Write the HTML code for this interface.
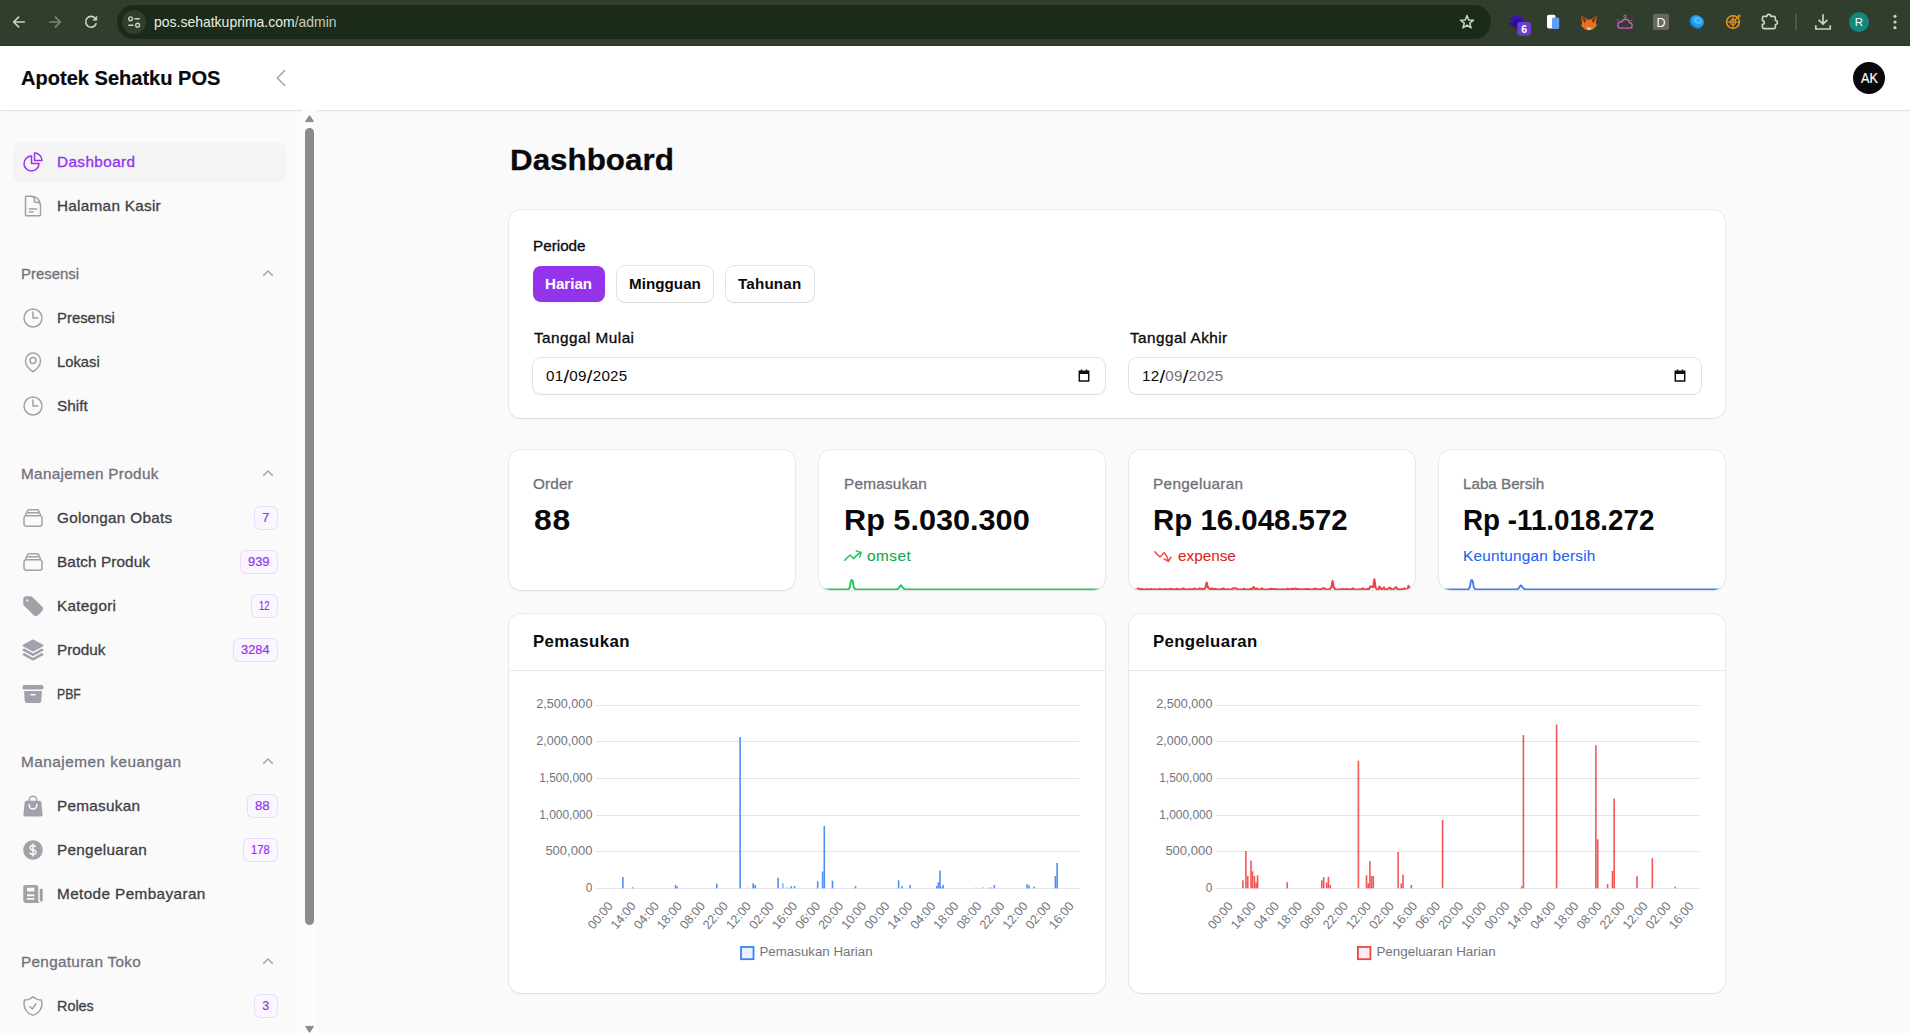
<!DOCTYPE html>
<html lang="id"><head><meta charset="utf-8"><title>Dashboard - Apotek Sehatku POS</title>
<style>
*{box-sizing:border-box;margin:0;padding:0}
html,body{width:1910px;height:1033px;overflow:hidden;background:#fafafa;font-family:"Liberation Sans", sans-serif;}
body{position:relative}
.t{position:absolute;white-space:nowrap;line-height:normal;}
.ic{position:absolute;overflow:visible}
.ax{font-family:"Liberation Sans", sans-serif;font-size:12.5px;fill:#71747e}
#tb{position:absolute;left:0;top:0;width:1910px;height:46px;background:#313e2d;border-bottom:1px solid #2b3728}
#url{position:absolute;left:117px;top:5px;width:1374px;height:34px;border-radius:17px;background:#1c2a1a}
#site{position:absolute;left:122px;top:10px;width:24px;height:24px;border-radius:12px;background:#313e2d}
#hdr{position:absolute;left:0;top:46px;width:1910px;height:64px;background:#fff;box-shadow:0 1px 0 rgba(9,9,11,.07),0 1px 3px rgba(0,0,0,.045)}
#ava{position:absolute;left:1853px;top:62px;width:32px;height:32px;border-radius:16px;background:#09090b}
#act{position:absolute;left:13px;top:142px;width:273px;height:40px;border-radius:8px;background:#f4f4f5}
#thumb{position:absolute;left:305px;top:128px;width:9px;height:797px;border-radius:4.5px;background:#8b8b8b}
#track{position:absolute;left:302px;top:110px;width:15px;height:923px;background:#fcfcfc}
.bdg{position:absolute;height:24px;border-radius:6px;background:#faf5ff;box-shadow:inset 0 0 0 1px rgba(147,51,234,.13)}
.card{position:absolute;background:#fff;border-radius:12px;box-shadow:0 0 0 1px rgba(9,9,11,.06),0 1px 2px rgba(0,0,0,.06)}
.btn{position:absolute;top:266px;height:36px;border-radius:8px;background:#fff;box-shadow:0 0 0 1px rgba(9,9,11,.11),0 1px 2px rgba(0,0,0,.05)}
.inp{position:absolute;top:358px;height:36px;width:572px;border-radius:8px;background:#fff;box-shadow:0 0 0 1px rgba(9,9,11,.11),0 1px 2px rgba(0,0,0,.05)}
.hr{position:absolute;height:1px;background:#e7e7ea;top:670px;width:596px}
</style></head>
<body>
<div id="browser">
<div id="tb"></div>
<div id="url"></div>
<div id="site"></div>
<svg class="ic" style="left:0;top:0" width="1910" height="46" viewBox="0 0 1910 46" fill="none">
 <!-- back -->
 <path d="M24.900 22H14M19.100 16.600 13.700 22l5.400 5.400" stroke="#c7d6be" stroke-width="1.600"/>
 <!-- forward -->
 <path d="M49.200 22h10.900M54.900 16.600 60.300 22l-5.400 5.400" stroke="#7b8875" stroke-width="1.600"/>
 <!-- reload -->
 <path d="M95.200 18.300A5.400 5.400 0 1 0 96.300 23.200" stroke="#c7d6be" stroke-width="1.600"/>
 <path d="M96.900 16.300v4h-4z" fill="#c7d6be" stroke="#c7d6be" stroke-width="0.600" stroke-linejoin="round"/>
 <!-- tune icon -->
 <circle cx="130.600" cy="18.800" r="1.900" stroke="#c7d6be" stroke-width="1.400"/>
 <path d="M134.500 18.800h5.200M128.300 25.200h5.200" stroke="#c7d6be" stroke-width="1.500"/>
 <circle cx="137.600" cy="25.200" r="1.900" stroke="#c7d6be" stroke-width="1.400"/>
 <!-- star -->
 <path d="M1467.00 15.40 L1468.70 19.95 L1473.56 20.17 L1469.76 23.20 L1471.06 27.88 L1467.00 25.20 L1462.94 27.88 L1464.24 23.20 L1460.44 20.17 L1465.30 19.95Z" stroke="#c7d6be" stroke-width="1.500" stroke-linejoin="round"/>
 <!-- ext1 purple layers -->
 <path d="M1509 19.500l8-5.300 8 5.300-8 5.300z" fill="#3b13b0"/>
 <path d="M1509 23.800l8-5.300 8 5.300-8 5.300z" fill="#2e0d94"/>
 <rect x="1517.200" y="22" width="13.800" height="13.800" rx="3" fill="#6a3fc8"/>
 <!-- ext2 pages -->
 <rect x="1547" y="14.800" width="8.500" height="13.800" rx="1.800" fill="#ffffff"/>
 <rect x="1552" y="17.600" width="7.200" height="11.400" rx="1.600" fill="#5ea0f7"/>
 <!-- ext3 fox -->
 <path d="M1581 15.400l6.300 4h3.400l6.300-4-1.200 7.200 1 3.200-3.600 3.400-2.700 1h-3l-2.700-1-3.600-3.400 1-3.200z" fill="#e8701c"/>
 <path d="M1581 15.400l5.200 4.600-1.600 3.200zM1597 15.400l-5.200 4.600 1.600 3.200z" fill="#7a2a10"/>
 <path d="M1586.500 27.500h5l-1 2.200h-3z" fill="#d8d0c8"/>
 <!-- ext4 cloud -->
 <path d="M1620.300 28.100h8.900a2.700 2.700 0 0 0 .4-5.400 4.100 4.100 0 0 0-7.900-.8 3.100 3.100 0 0 0-1.400 6.200z" stroke="#cf5ad6" stroke-width="1.400"/>
 <circle cx="1625" cy="16.300" r="1.300" stroke="#e070a0" stroke-width="0.800"/>
 <circle cx="1617.800" cy="19.900" r="0.700" fill="#e070a0"/><circle cx="1631.800" cy="20.800" r="0.700" fill="#e070a0"/>
 <!-- ext5 D -->
 <rect x="1653" y="13.800" width="16" height="16.200" rx="1.500" fill="#666666"/>
 <!-- ext6 blue disc -->
 <ellipse cx="1696.300" cy="22.600" rx="7.200" ry="5.800" transform="rotate(35 1696.300 22.600)" fill="#0f6fc4"/><ellipse cx="1697.200" cy="21.200" rx="7.200" ry="5.800" transform="rotate(35 1697.200 21.200)" fill="#1e9cf0"/>
 <ellipse cx="1697.800" cy="20.600" rx="4.300" ry="3.100" transform="rotate(35 1697.800 20.600)" fill="#58bbff"/>
 <ellipse cx="1698.300" cy="20.200" rx="1.800" ry="1.200" transform="rotate(35 1698.300 20.200)" fill="#1e9cf0"/>
 <!-- ext7 orange target -->
 <circle cx="1733" cy="22" r="6.400" stroke="#f39b1c" stroke-width="1.400"/>
 <circle cx="1733" cy="22" r="2.600" stroke="#f07a1a" stroke-width="1.200"/>
 <path d="M1733 15.600v12.800M1726.600 22h12.800M1735 20l4.300-4.300" stroke="#f39b1c" stroke-width="1.100"/>
 <circle cx="1739.200" cy="16" r="1.500" fill="#f07a1a"/>
 <!-- puzzle -->
 <path d="M1763.900 16.400H1766.900A2 2 0 0 1 1770.900 16.400H1773.900Q1775.400 16.400 1775.400 17.900V20.500A2 2 0 0 1 1775.400 24.500V27.100Q1775.400 28.600 1773.900 28.600H1763.900Q1762.400 28.600 1762.400 27.100V24.400A1.900 1.900 0 0 0 1762.400 20.600V17.900Q1762.400 16.400 1763.900 16.400Z" stroke="#c7d6be" stroke-width="1.600" stroke-linejoin="round"/>
 <!-- separator -->
 <path d="M1796 14v16" stroke="#566350" stroke-width="1.500"/>
 <!-- download -->
 <path d="M1823 14.200v9.600M1818.600 19.800l4.400 4.300 4.400-4.300M1815.800 25.200v3.800h14.400v-3.800" stroke="#c7d6be" stroke-width="1.700"/>
 <!-- avatar R -->
 <circle cx="1859" cy="22" r="10" fill="#12877b"/>
 <!-- dots -->
 <circle cx="1895" cy="16.300" r="1.600" fill="#c7d6be"/><circle cx="1895" cy="22" r="1.600" fill="#c7d6be"/><circle cx="1895" cy="27.700" r="1.600" fill="#c7d6be"/>
 <text x="1524.100" y="33.300" text-anchor="middle" font-size="10.500" font-weight="700" fill="#fff" font-family='"Liberation Sans", sans-serif'>6</text>
 <text x="1661" y="27" text-anchor="middle" font-size="12.500" fill="#fff" font-family='"Liberation Sans", sans-serif'>D</text>
 <text x="1859" y="26" text-anchor="middle" font-size="11.500" fill="#fff" font-family='"Liberation Sans", sans-serif'>R</text>
</svg>
<span class="t" id="t0" style="left:154.4px;top:14px;font-size:14.3px;color:#e9efe4;transform:scaleX(0.9778);transform-origin:0 0;">pos.sehatkuprima.com<span style="color:#c3cdbd">/admin</span></span>
</div>
<header><div id="hdr"></div><div id="ava"></div>
<svg class="ic" style="left:269px;top:66px" width="24" height="24" viewBox="0 0 24 24" fill="none" stroke="#a1a1aa" stroke-width="1.5" stroke-linecap="round" stroke-linejoin="round"><path d="M15.75 19.5 8.25 12l7.5-7.5"/></svg>
<span class="t" id="t1" style="left:21.4px;top:67px;font-size:20px;color:#09090b;font-weight:700;-webkit-text-stroke:0.2px #09090b;transform:scaleX(1.0023);transform-origin:0 0;">Apotek Sehatku POS</span>
<span class="t" id="t2" style="left:1860.8px;top:71px;font-size:13.8px;color:#ffffff;-webkit-text-stroke:0.2px #ffffff;transform:scaleX(0.9127);transform-origin:0 0;">AK</span>
</header>
<nav><div id="act"></div>
<div id="track"></div><div id="thumb"></div>
<svg class="ic" style="left:302px;top:111px" width="15" height="922" viewBox="0 0 15 922"><path d="M7.500 4.600l4 6h-8z" fill="#8b8b8b" stroke="#8b8b8b" stroke-width="1" stroke-linejoin="round"/><path d="M7.500 921.400l4-6h-8z" fill="#8b8b8b" stroke="#8b8b8b" stroke-width="1" stroke-linejoin="round"/></svg>
<div class="bdg" style="left:254.0px;top:506px;width:24.0px"></div><div class="bdg" style="left:240.1px;top:550px;width:37.9px"></div><div class="bdg" style="left:251.1px;top:594px;width:26.9px"></div><div class="bdg" style="left:233.0px;top:638px;width:45.0px"></div><div class="bdg" style="left:247.0px;top:794px;width:31.0px"></div><div class="bdg" style="left:243.0px;top:838px;width:35.0px"></div><div class="bdg" style="left:254.1px;top:994px;width:23.9px"></div>
<svg class="ic" style="left:21px;top:150px" width="24" height="24" viewBox="0 0 24 24" fill="none" stroke="#9333ea" stroke-width="1.5" stroke-linecap="round" stroke-linejoin="round"><path d="M10.5 6a7.5 7.5 0 1 0 7.5 7.5h-7.5V6Z"/><path d="M13.5 10.5H21A7.5 7.5 0 0 0 13.5 3v7.5Z"/></svg><svg class="ic" style="left:21px;top:194px" width="24" height="24" viewBox="0 0 24 24" fill="none" stroke="#a1a1aa" stroke-width="1.5" stroke-linecap="round" stroke-linejoin="round"><path d="M19.5 14.25v-2.625a3.375 3.375 0 0 0-3.375-3.375h-1.5A1.125 1.125 0 0 1 13.5 7.125v-1.5a3.375 3.375 0 0 0-3.375-3.375H8.25m0 12.75h7.5m-7.5 3H12M10.5 2.25H5.625c-.621 0-1.125.504-1.125 1.125v17.25c0 .621.504 1.125 1.125 1.125h12.75c.621 0 1.125-.504 1.125-1.125V11.25a9 9 0 0 0-9-9Z"/></svg><svg class="ic" style="left:21px;top:306px" width="24" height="24" viewBox="0 0 24 24" fill="none" stroke="#a1a1aa" stroke-width="1.5" stroke-linecap="round" stroke-linejoin="round"><path d="M12 6v6h4.5m4.5 0a9 9 0 1 1-18 0 9 9 0 0 1 18 0Z"/></svg><svg class="ic" style="left:21px;top:350px" width="24" height="24" viewBox="0 0 24 24" fill="none" stroke="#a1a1aa" stroke-width="1.5" stroke-linecap="round" stroke-linejoin="round"><path d="M15 10.5a3 3 0 1 1-6 0 3 3 0 0 1 6 0Z"/><path d="M19.5 10.5c0 7.142-7.5 11.25-7.5 11.25S4.5 17.642 4.5 10.5a7.5 7.5 0 1 1 15 0Z"/></svg><svg class="ic" style="left:21px;top:394px" width="24" height="24" viewBox="0 0 24 24" fill="none" stroke="#a1a1aa" stroke-width="1.5" stroke-linecap="round" stroke-linejoin="round"><path d="M12 6v6h4.5m4.5 0a9 9 0 1 1-18 0 9 9 0 0 1 18 0Z"/></svg><svg class="ic" style="left:21px;top:506px" width="24" height="24" viewBox="0 0 24 24" fill="none" stroke="#a1a1aa" stroke-width="1.5" stroke-linecap="round" stroke-linejoin="round"><path d="M6 6.878V6a2.25 2.25 0 0 1 2.25-2.25h7.5A2.25 2.25 0 0 1 18 6v.878m-12 0c.235-.083.487-.128.75-.128h10.5c.263 0 .515.045.75.128m-12 0A2.25 2.25 0 0 0 4.5 9v.878m13.5-3A2.25 2.25 0 0 1 19.5 9v.878m0 0a2.246 2.246 0 0 0-.75-.128H5.25c-.263 0-.515.045-.75.128m15 0A2.25 2.25 0 0 1 21 12v6a2.25 2.25 0 0 1-2.25 2.25H5.25A2.25 2.25 0 0 1 3 18v-6c0-.98.626-1.813 1.5-2.122"/></svg><svg class="ic" style="left:21px;top:550px" width="24" height="24" viewBox="0 0 24 24" fill="none" stroke="#a1a1aa" stroke-width="1.5" stroke-linecap="round" stroke-linejoin="round"><path d="M6 6.878V6a2.25 2.25 0 0 1 2.25-2.25h7.5A2.25 2.25 0 0 1 18 6v.878m-12 0c.235-.083.487-.128.75-.128h10.5c.263 0 .515.045.75.128m-12 0A2.25 2.25 0 0 0 4.5 9v.878m13.5-3A2.25 2.25 0 0 1 19.5 9v.878m0 0a2.246 2.246 0 0 0-.75-.128H5.25c-.263 0-.515.045-.75.128m15 0A2.25 2.25 0 0 1 21 12v6a2.25 2.25 0 0 1-2.25 2.25H5.25A2.25 2.25 0 0 1 3 18v-6c0-.98.626-1.813 1.5-2.122"/></svg><svg class="ic" style="left:21px;top:594px" width="24" height="24" viewBox="0 0 24 24" fill="#a1a1aa"><path fill-rule="evenodd" clip-rule="evenodd" d="M5.25 2.25a3 3 0 0 0-3 3v4.318a3 3 0 0 0 .879 2.121l9.58 9.581c.92.92 2.39 1.186 3.548.428a18.849 18.849 0 0 0 5.441-5.44c.758-1.16.492-2.629-.428-3.548l-9.58-9.581a3 3 0 0 0-2.122-.879H5.25ZM6.375 7.5a1.125 1.125 0 1 0 0-2.25 1.125 1.125 0 0 0 0 2.25Z"/></svg><svg class="ic" style="left:21px;top:638px" width="24" height="24" viewBox="0 0 24 24" fill="#a1a1aa"><path fill-rule="evenodd" clip-rule="evenodd" d="M11.644 1.59a.75.75 0 0 1 .712 0l9.75 5.25a.75.75 0 0 1 0 1.32l-9.75 5.25a.75.75 0 0 1-.712 0l-9.75-5.25a.75.75 0 0 1 0-1.32l9.75-5.25Z"/><path fill-rule="evenodd" clip-rule="evenodd" d="m3.265 10.602 7.668 4.129a2.25 2.25 0 0 0 2.134 0l7.668-4.13 1.37.739a.75.75 0 0 1 0 1.32l-9.75 5.25a.75.75 0 0 1-.71 0l-9.75-5.25a.75.75 0 0 1 0-1.32l1.37-.738Z"/><path fill-rule="evenodd" clip-rule="evenodd" d="m10.933 19.231-7.668-4.13-1.37.739a.75.75 0 0 0 0 1.32l9.75 5.25c.221.12.489.12.71 0l9.75-5.25a.75.75 0 0 0 0-1.32l-1.37-.738-7.668 4.13a2.25 2.25 0 0 1-2.134-.001Z"/></svg><svg class="ic" style="left:21px;top:682px" width="24" height="24" viewBox="0 0 24 24" fill="#a1a1aa"><path fill-rule="evenodd" clip-rule="evenodd" d="M3.375 3C2.339 3 1.5 3.84 1.5 4.875v.75c0 1.036.84 1.875 1.875 1.875h17.25c1.035 0 1.875-.84 1.875-1.875v-.75C22.5 3.839 21.66 3 20.625 3H3.375Z"/><path fill-rule="evenodd" clip-rule="evenodd" d="m3.087 9 .54 9.176A3 3 0 0 0 6.62 21h10.757a3 3 0 0 0 2.995-2.824L20.913 9H3.087Zm6.163 3.75A.75.75 0 0 1 10 12h4a.75.75 0 0 1 0 1.5h-4a.75.75 0 0 1-.75-.75Z"/></svg><svg class="ic" style="left:21px;top:794px" width="24" height="24" viewBox="0 0 24 24" fill="#a1a1aa"><path fill-rule="evenodd" clip-rule="evenodd" d="M7.5 6v.75H5.513c-.96 0-1.764.724-1.865 1.679l-1.263 12A1.875 1.875 0 0 0 4.25 22.5h15.5a1.875 1.875 0 0 0 1.865-2.071l-1.263-12a1.875 1.875 0 0 0-1.865-1.679H16.5V6a4.5 4.5 0 1 0-9 0ZM12 3a3 3 0 0 0-3 3v.75h6V6a3 3 0 0 0-3-3Zm-3 8.25a3 3 0 1 0 6 0v-.75a.75.75 0 0 1 1.5 0v.75a4.5 4.5 0 1 1-9 0v-.75a.75.75 0 0 1 1.5 0v.75Z"/></svg><svg class="ic" style="left:21px;top:838px" width="24" height="24" viewBox="0 0 24 24" fill="#a1a1aa"><path fill-rule="evenodd" clip-rule="evenodd" d="M10.464 8.746c.227-.18.497-.311.786-.394v2.795a2.252 2.252 0 0 1-.786-.393c-.394-.313-.546-.681-.546-1.004 0-.323.152-.691.546-1.004ZM12.75 15.662v-2.824c.347.085.664.228.921.421.427.32.579.686.579.991 0 .305-.152.671-.579.991a2.534 2.534 0 0 1-.921.42Z"/><path fill-rule="evenodd" clip-rule="evenodd" d="M12 2.25c-5.385 0-9.75 4.365-9.75 9.75s4.365 9.75 9.75 9.75 9.75-4.365 9.75-9.75S17.385 2.25 12 2.25ZM12.75 6a.75.75 0 0 0-1.5 0v.816a3.836 3.836 0 0 0-1.72.756c-.712.566-1.112 1.35-1.112 2.178 0 .829.4 1.612 1.113 2.178.502.4 1.102.647 1.719.756v2.978a2.536 2.536 0 0 1-.921-.421l-.879-.66a.75.75 0 0 0-.9 1.2l.879.66c.533.4 1.169.645 1.821.75V18a.75.75 0 0 0 1.5 0v-.81a4.124 4.124 0 0 0 1.821-.749c.745-.559 1.179-1.344 1.179-2.191 0-.847-.434-1.632-1.179-2.191a4.122 4.122 0 0 0-1.821-.75V8.354c.29.082.559.213.786.393l.415.33a.75.75 0 0 0 .933-1.175l-.415-.33a3.836 3.836 0 0 0-1.719-.755V6Z"/></svg><svg class="ic" style="left:21px;top:882px" width="24" height="24" viewBox="0 0 24 24" fill="#a1a1aa"><path fill-rule="evenodd" clip-rule="evenodd" d="M4.125 3C3.089 3 2.250 3.840 2.250 4.875V18a3 3 0 0 0 3 3h15a3 3 0 0 1-3-3V4.875C17.250 3.839 16.410 3 15.375 3H4.125ZM6 5.700h7.300v3.700H6ZM6 12.300h7.300v1.900H6ZM6 15.900h7.300v1.900H6Z"/><path fill-rule="evenodd" clip-rule="evenodd" d="M18.750 6.750h1.875c.621 0 1.125.504 1.125 1.125V18a1.500 1.500 0 0 1-3 0V6.750Z"/></svg><svg class="ic" style="left:21px;top:994px" width="24" height="24" viewBox="0 0 24 24" fill="none" stroke="#a1a1aa" stroke-width="1.5" stroke-linecap="round" stroke-linejoin="round"><path d="M9 12.75 11.25 15 15 9.75m-3-7.036A11.959 11.959 0 0 1 3.598 6 11.99 11.99 0 0 0 3 9.749c0 5.592 3.824 10.29 9 11.623 5.176-1.332 9-6.03 9-11.622 0-1.31-.21-2.571-.598-3.751h-.152c-3.196 0-6.1-1.248-8.25-3.285Z"/></svg><svg class="ic" style="left:258px;top:263.5px" width="20" height="20" viewBox="0 0 20 20" fill="#a1a1aa"><path fill-rule="evenodd" clip-rule="evenodd" d="M9.47 6.47a.75.75 0 0 1 1.06 0l4.25 4.25a.75.75 0 1 1-1.06 1.06L10 8.06l-3.72 3.72a.75.75 0 0 1-1.06-1.06l4.25-4.25Z"/></svg><svg class="ic" style="left:258px;top:463.5px" width="20" height="20" viewBox="0 0 20 20" fill="#a1a1aa"><path fill-rule="evenodd" clip-rule="evenodd" d="M9.47 6.47a.75.75 0 0 1 1.06 0l4.25 4.25a.75.75 0 1 1-1.06 1.06L10 8.06l-3.72 3.72a.75.75 0 0 1-1.06-1.06l4.25-4.25Z"/></svg><svg class="ic" style="left:258px;top:751.5px" width="20" height="20" viewBox="0 0 20 20" fill="#a1a1aa"><path fill-rule="evenodd" clip-rule="evenodd" d="M9.47 6.47a.75.75 0 0 1 1.06 0l4.25 4.25a.75.75 0 1 1-1.06 1.06L10 8.06l-3.72 3.72a.75.75 0 0 1-1.06-1.06l4.25-4.25Z"/></svg><svg class="ic" style="left:258px;top:951.5px" width="20" height="20" viewBox="0 0 20 20" fill="#a1a1aa"><path fill-rule="evenodd" clip-rule="evenodd" d="M9.47 6.47a.75.75 0 0 1 1.06 0l4.25 4.25a.75.75 0 1 1-1.06 1.06L10 8.06l-3.72 3.72a.75.75 0 0 1-1.06-1.06l4.25-4.25Z"/></svg>
<span class="t" id="t3" style="left:57.3px;top:154px;font-size:14.3px;color:#9333ea;-webkit-text-stroke:0.3px #9333ea;transform:scaleX(1.0700);transform-origin:0 0;letter-spacing:0.380px;">Dashboard</span>
<span class="t" id="t4" style="left:57.3px;top:198px;font-size:14.3px;color:#3f3f46;-webkit-text-stroke:0.3px #3f3f46;transform:scaleX(1.0700);transform-origin:0 0;letter-spacing:0.263px;">Halaman Kasir</span>
<span class="t" id="t5" style="left:21.4px;top:266px;font-size:14.3px;color:#71717a;-webkit-text-stroke:0.3px #71717a;transform:scaleX(1.0445);transform-origin:0 0;">Presensi</span>
<span class="t" id="t6" style="left:57.3px;top:310px;font-size:14.3px;color:#3f3f46;-webkit-text-stroke:0.3px #3f3f46;transform:scaleX(1.0409);transform-origin:0 0;">Presensi</span>
<span class="t" id="t7" style="left:57.3px;top:354px;font-size:14.3px;color:#3f3f46;-webkit-text-stroke:0.3px #3f3f46;transform:scaleX(1.0332);transform-origin:0 0;">Lokasi</span>
<span class="t" id="t8" style="left:57.3px;top:398px;font-size:14.3px;color:#3f3f46;-webkit-text-stroke:0.3px #3f3f46;transform:scaleX(1.0700);transform-origin:0 0;letter-spacing:0.021px;">Shift</span>
<span class="t" id="t9" style="left:21.4px;top:466px;font-size:14.3px;color:#71717a;-webkit-text-stroke:0.3px #71717a;transform:scaleX(1.0700);transform-origin:0 0;letter-spacing:0.295px;">Manajemen Produk</span>
<span class="t" id="t10" style="left:57.3px;top:510px;font-size:14.3px;color:#3f3f46;-webkit-text-stroke:0.3px #3f3f46;transform:scaleX(1.0700);transform-origin:0 0;letter-spacing:0.272px;">Golongan Obats</span>
<span class="t" id="t11" style="left:57.3px;top:554px;font-size:14.3px;color:#3f3f46;-webkit-text-stroke:0.3px #3f3f46;transform:scaleX(1.0700);transform-origin:0 0;letter-spacing:0.089px;">Batch Produk</span>
<span class="t" id="t12" style="left:57.3px;top:598px;font-size:14.3px;color:#3f3f46;-webkit-text-stroke:0.3px #3f3f46;transform:scaleX(1.0700);transform-origin:0 0;letter-spacing:0.268px;">Kategori</span>
<span class="t" id="t13" style="left:57.3px;top:642px;font-size:14.3px;color:#3f3f46;-webkit-text-stroke:0.3px #3f3f46;transform:scaleX(1.0700);transform-origin:0 0;">Produk</span>
<span class="t" id="t14" style="left:57.3px;top:686px;font-size:14.3px;color:#3f3f46;-webkit-text-stroke:0.3px #3f3f46;transform:scaleX(0.8557);transform-origin:0 0;">PBF</span>
<span class="t" id="t15" style="left:21.4px;top:754px;font-size:14.3px;color:#71717a;-webkit-text-stroke:0.3px #71717a;transform:scaleX(1.0700);transform-origin:0 0;letter-spacing:0.479px;">Manajemen keuangan</span>
<span class="t" id="t16" style="left:57.3px;top:798px;font-size:14.3px;color:#3f3f46;-webkit-text-stroke:0.3px #3f3f46;transform:scaleX(1.0700);transform-origin:0 0;letter-spacing:0.270px;">Pemasukan</span>
<span class="t" id="t17" style="left:57.3px;top:842px;font-size:14.3px;color:#3f3f46;-webkit-text-stroke:0.3px #3f3f46;transform:scaleX(1.0700);transform-origin:0 0;letter-spacing:0.274px;">Pengeluaran</span>
<span class="t" id="t18" style="left:57.3px;top:886px;font-size:14.3px;color:#3f3f46;-webkit-text-stroke:0.3px #3f3f46;transform:scaleX(1.0700);transform-origin:0 0;letter-spacing:0.372px;">Metode Pembayaran</span>
<span class="t" id="t19" style="left:21.4px;top:954px;font-size:14.3px;color:#71717a;-webkit-text-stroke:0.3px #71717a;transform:scaleX(1.0700);transform-origin:0 0;letter-spacing:0.294px;">Pengaturan Toko</span>
<span class="t" id="t20" style="left:57.3px;top:998px;font-size:14.3px;color:#3f3f46;-webkit-text-stroke:0.3px #3f3f46;transform:scaleX(1.0065);transform-origin:0 0;">Roles</span>
<span class="t" id="t21" style="left:262.2px;top:511px;font-size:12.4px;color:#9333ea;-webkit-text-stroke:0.2px #9333ea;">7</span>
<span class="t" id="t22" style="left:248.3px;top:555px;font-size:12.4px;color:#9333ea;-webkit-text-stroke:0.2px #9333ea;transform:scaleX(1.0393);transform-origin:0 0;">939</span>
<span class="t" id="t23" style="left:259.3px;top:599px;font-size:12.4px;color:#9333ea;-webkit-text-stroke:0.2px #9333ea;transform:scaleX(0.7610);transform-origin:0 0;">12</span>
<span class="t" id="t24" style="left:241.2px;top:643px;font-size:12.4px;color:#9333ea;-webkit-text-stroke:0.2px #9333ea;transform:scaleX(1.0371);transform-origin:0 0;">3284</span>
<span class="t" id="t25" style="left:255.2px;top:799px;font-size:12.4px;color:#9333ea;-webkit-text-stroke:0.2px #9333ea;transform:scaleX(1.0582);transform-origin:0 0;">88</span>
<span class="t" id="t26" style="left:251.2px;top:843px;font-size:12.4px;color:#9333ea;-webkit-text-stroke:0.2px #9333ea;transform:scaleX(0.8991);transform-origin:0 0;">178</span>
<span class="t" id="t27" style="left:262.3px;top:999px;font-size:12.4px;color:#9333ea;-webkit-text-stroke:0.2px #9333ea;">3</span>
</nav>
<main>
<section class="card" style="left:509px;top:210px;width:1216px;height:208px"></section>
<div class="btn" style="left:533px;width:72px;background:#9333ea;box-shadow:0 1px 2px rgba(0,0,0,.05)"></div>
<div class="btn" style="left:617px;width:96px"></div>
<div class="btn" style="left:726px;width:88px"></div>
<div class="inp" style="left:533px"></div><div class="inp" style="left:1129px"></div>
<svg class="ic" style="left:1077.9px;top:368.800px" width="12" height="13" viewBox="0 0 12 13"><path d="M1.300 2.300h9.400v9.700H1.300z" fill="none" stroke="#111" stroke-width="1.500"/><path d="M1.300 2.300h9.400v2.700H1.300z" fill="#111"/><path d="M3.500 .6v2M8.500 .6v2" stroke="#111" stroke-width="1.400"/></svg><svg class="ic" style="left:1673.9px;top:368.800px" width="12" height="13" viewBox="0 0 12 13"><path d="M1.300 2.300h9.400v9.700H1.300z" fill="none" stroke="#111" stroke-width="1.500"/><path d="M1.300 2.300h9.400v2.700H1.300z" fill="#111"/><path d="M3.500 .6v2M8.500 .6v2" stroke="#111" stroke-width="1.400"/></svg>
<section class="card" style="left:509px;top:450px;width:286px;height:140px"></section>
<section class="card" style="left:819px;top:450px;width:286px;height:140px"></section>
<section class="card" style="left:1129px;top:450px;width:286px;height:140px"></section>
<section class="card" style="left:1439px;top:450px;width:286px;height:140px"></section>
<section class="card" style="left:509px;top:614px;width:596px;height:379px"></section>
<section class="card" style="left:1129px;top:614px;width:596px;height:379px"></section>
<div class="hr" style="left:509px"></div><div class="hr" style="left:1129px"></div>
<svg class="ic" style="left:0;top:0" width="1910" height="1033" viewBox="0 0 1910 1033"><defs><clipPath id="cp0"><rect x="819" y="450" width="286" height="140" rx="12"/></clipPath><clipPath id="cp1"><rect x="1129" y="450" width="286" height="140" rx="12"/></clipPath><clipPath id="cp2"><rect x="1439" y="450" width="286" height="140" rx="12"/></clipPath></defs><g clip-path="url(#cp0)"><path d="M819.0 589.4 L848.2 589.4 L849.9 587.2 L850.9 581.0 L851.8 579.9 L852.7 581.0 L853.7 587.2 L855.4 589.4 L897.0 589.4 L899.0 588.0 L900.3 585.8 L900.9 585.4 L901.5 585.8 L903.0 588.0 L905.0 589.4 L1105.0 589.4" fill="none" stroke="#22c55e" stroke-width="1.9" stroke-linejoin="round" stroke-linecap="round"/></g><g clip-path="url(#cp1)"><path d="M1129.0 588.4 L1130.6 589.4 L1132.2 589.3 L1133.8 589.6 L1135.4 589.6 L1137.0 589.6 L1138.6 588.4 L1140.2 589.6 L1141.8 589.1 L1143.4 589.6 L1145.0 589.6 L1146.6 589.3 L1148.2 589.3 L1149.8 589.6 L1151.4 589.1 L1153.0 589.6 L1154.6 589.3 L1156.2 589.6 L1157.8 589.6 L1159.4 589.1 L1161.0 589.6 L1162.6 589.3 L1164.2 589.6 L1165.8 589.1 L1167.4 589.6 L1169.0 589.4 L1170.6 588.7 L1172.2 589.3 L1173.8 589.4 L1175.4 589.6 L1177.0 588.7 L1178.6 589.4 L1180.2 589.6 L1181.8 589.1 L1183.4 588.4 L1185.0 589.6 L1186.6 589.6 L1188.2 589.6 L1189.8 589.1 L1191.4 589.6 L1193.0 589.3 L1194.6 588.4 L1196.2 589.6 L1197.8 589.6 L1199.4 588.4 L1201.0 588.7 L1202.6 589.1 L1204.2 589.4 L1205.5 587.4 L1206.7 582.6 L1207.9 587.4 L1210.6 589.6 L1212.2 588.4 L1213.8 589.6 L1215.4 588.7 L1217.0 589.6 L1218.6 589.6 L1220.2 589.3 L1221.8 589.4 L1223.4 588.4 L1225.0 589.4 L1226.6 589.6 L1228.2 589.3 L1229.8 589.6 L1231.4 589.6 L1233.0 588.4 L1234.6 588.4 L1236.2 588.4 L1237.8 589.6 L1239.4 589.6 L1241.0 589.6 L1242.6 589.6 L1244.2 588.7 L1245.8 589.6 L1247.4 589.6 L1249.0 589.6 L1250.6 588.7 L1252.2 589.6 L1253.5 587.0 L1255.4 589.3 L1257.0 588.4 L1258.6 589.6 L1260.2 589.6 L1261.8 588.4 L1263.4 589.4 L1265.0 589.6 L1266.6 589.6 L1268.2 589.6 L1269.8 589.1 L1271.4 588.7 L1273.0 589.4 L1274.6 589.1 L1276.2 589.3 L1277.8 589.3 L1279.4 589.6 L1281.0 589.6 L1282.6 589.4 L1284.2 589.6 L1285.8 589.3 L1287.4 588.7 L1289.0 589.4 L1290.6 589.3 L1292.2 588.7 L1293.8 589.3 L1295.4 588.4 L1297.0 589.3 L1298.6 589.1 L1300.2 589.4 L1301.8 589.6 L1303.4 589.4 L1305.0 589.4 L1306.6 589.1 L1308.2 589.1 L1309.8 589.6 L1311.4 589.6 L1313.0 589.4 L1314.6 588.7 L1316.2 588.7 L1317.8 589.6 L1319.4 589.4 L1321.0 589.3 L1322.6 588.4 L1324.2 588.4 L1325.8 589.4 L1327.4 589.6 L1329.0 589.6 L1331.4 587.4 L1332.6 581.0 L1333.8 587.4 L1335.4 589.3 L1337.0 589.6 L1338.6 589.6 L1340.2 589.3 L1341.8 589.6 L1343.4 589.1 L1345.0 589.6 L1346.6 589.1 L1348.2 589.6 L1349.8 589.4 L1351.4 589.6 L1353.0 588.4 L1354.6 589.6 L1356.2 589.6 L1357.8 589.6 L1359.4 589.4 L1361.0 589.6 L1362.6 588.4 L1364.2 589.6 L1365.8 589.6 L1367.4 589.1 L1369.0 589.3 L1370.5 586.3 L1373.2 587.4 L1374.4 579.2 L1375.6 587.4 L1377.0 589.6 L1378.6 589.6 L1379.4 586.5 L1381.8 589.6 L1384.0 587.4 L1385.0 589.6 L1386.6 589.6 L1388.2 588.7 L1390.0 587.6 L1391.4 589.4 L1393.0 589.6 L1394.6 588.4 L1396.0 587.2 L1397.8 589.6 L1399.4 589.4 L1401.0 589.6 L1402.6 589.1 L1404.2 588.4 L1405.8 589.4 L1407.4 589.6 L1408.5 585.8 L1410.6 589.6 L1412.2 588.7 L1413.8 588.4 L1415.4 589.4" fill="none" stroke="#ef4444" stroke-width="2.1" stroke-linejoin="round" stroke-linecap="round"/></g><g clip-path="url(#cp2)"><path d="M1439.0 589.4 L1468.2 589.4 L1469.9 587.2 L1470.9 581.0 L1471.8 579.9 L1472.7 581.0 L1473.7 587.2 L1475.4 589.4 L1517.0 589.4 L1519.0 588.0 L1520.3 585.8 L1520.9 585.4 L1521.5 585.8 L1523.0 588.0 L1525.0 589.4 L1725.0 589.4" fill="none" stroke="#3b82f6" stroke-width="1.9" stroke-linejoin="round" stroke-linecap="round"/></g></svg>
<svg class="ic" style="left:0;top:0" width="1910" height="1033" viewBox="0 0 1910 1033"><line x1="595.9" x2="1079.3" y1="705.5" y2="705.5" stroke="#e3e5ea" stroke-width="1"/><line x1="595.9" x2="1079.3" y1="741.5" y2="741.5" stroke="#e3e5ea" stroke-width="1"/><line x1="595.9" x2="1079.3" y1="778.5" y2="778.5" stroke="#e3e5ea" stroke-width="1"/><line x1="595.9" x2="1079.3" y1="815.5" y2="815.5" stroke="#e3e5ea" stroke-width="1"/><line x1="595.9" x2="1079.3" y1="851.5" y2="851.5" stroke="#e3e5ea" stroke-width="1"/><line x1="595.9" x2="1079.3" y1="888.5" y2="888.5" stroke="#e3e5ea" stroke-width="1"/><text x="536.3" y="708.0" class="ax" textLength="56.1" lengthAdjust="spacingAndGlyphs">2,500,000</text><text x="536.3" y="744.9" class="ax" textLength="56.1" lengthAdjust="spacingAndGlyphs">2,000,000</text><text x="539.2" y="781.5" class="ax" textLength="53.2" lengthAdjust="spacingAndGlyphs">1,500,000</text><text x="539.2" y="818.5" class="ax" textLength="53.2" lengthAdjust="spacingAndGlyphs">1,000,000</text><text x="545.4" y="854.5" class="ax" textLength="47" lengthAdjust="spacingAndGlyphs">500,000</text><text x="585.8" y="891.8" class="ax" textLength="6.6" lengthAdjust="spacingAndGlyphs">0</text><text transform="translate(610.3,903.4) rotate(-50)" text-anchor="end" y="4.2" class="ax">00:00</text><text transform="translate(633.3,903.4) rotate(-50)" text-anchor="end" y="4.2" class="ax">14:00</text><text transform="translate(656.4,903.4) rotate(-50)" text-anchor="end" y="4.2" class="ax">04:00</text><text transform="translate(679.4,903.4) rotate(-50)" text-anchor="end" y="4.2" class="ax">18:00</text><text transform="translate(702.5,903.4) rotate(-50)" text-anchor="end" y="4.2" class="ax">08:00</text><text transform="translate(725.5,903.4) rotate(-50)" text-anchor="end" y="4.2" class="ax">22:00</text><text transform="translate(748.6,903.4) rotate(-50)" text-anchor="end" y="4.2" class="ax">12:00</text><text transform="translate(771.6,903.4) rotate(-50)" text-anchor="end" y="4.2" class="ax">02:00</text><text transform="translate(794.7,903.4) rotate(-50)" text-anchor="end" y="4.2" class="ax">16:00</text><text transform="translate(817.8,903.4) rotate(-50)" text-anchor="end" y="4.2" class="ax">06:00</text><text transform="translate(840.8,903.4) rotate(-50)" text-anchor="end" y="4.2" class="ax">20:00</text><text transform="translate(863.8,903.4) rotate(-50)" text-anchor="end" y="4.2" class="ax">10:00</text><text transform="translate(886.9,903.4) rotate(-50)" text-anchor="end" y="4.2" class="ax">00:00</text><text transform="translate(910.0,903.4) rotate(-50)" text-anchor="end" y="4.2" class="ax">14:00</text><text transform="translate(933.0,903.4) rotate(-50)" text-anchor="end" y="4.2" class="ax">04:00</text><text transform="translate(956.0,903.4) rotate(-50)" text-anchor="end" y="4.2" class="ax">18:00</text><text transform="translate(979.1,903.4) rotate(-50)" text-anchor="end" y="4.2" class="ax">08:00</text><text transform="translate(1002.1,903.4) rotate(-50)" text-anchor="end" y="4.2" class="ax">22:00</text><text transform="translate(1025.2,903.4) rotate(-50)" text-anchor="end" y="4.2" class="ax">12:00</text><text transform="translate(1048.2,903.4) rotate(-50)" text-anchor="end" y="4.2" class="ax">02:00</text><text transform="translate(1071.3,903.4) rotate(-50)" text-anchor="end" y="4.2" class="ax">16:00</text><rect x="622.10" y="877.0" width="1.6" height="11.3" fill="#3b82f6" opacity="0.90"/><rect x="631.90" y="887.3" width="1.6" height="1.0" fill="#3b82f6" opacity="0.90"/><rect x="674.80" y="885.0" width="1.6" height="3.3" fill="#3b82f6" opacity="0.90"/><rect x="676.40" y="886.6" width="1.6" height="1.7" fill="#3b82f6" opacity="0.90"/><rect x="716.00" y="883.6" width="1.6" height="4.7" fill="#3b82f6" opacity="0.90"/><rect x="739.30" y="737.0" width="1.6" height="151.3" fill="#3b82f6" opacity="0.90"/><rect x="747.20" y="887.5" width="1.6" height="0.8" fill="#3b82f6" opacity="0.40"/><rect x="752.40" y="883.3" width="1.6" height="5.0" fill="#3b82f6" opacity="0.90"/><rect x="754.40" y="885.0" width="1.6" height="3.3" fill="#3b82f6" opacity="0.90"/><rect x="777.30" y="877.7" width="1.6" height="10.6" fill="#3b82f6" opacity="0.90"/><rect x="782.10" y="883.3" width="1.6" height="5.0" fill="#3b82f6" opacity="0.60"/><rect x="785.50" y="887.5" width="1.6" height="0.8" fill="#3b82f6" opacity="0.50"/><rect x="787.70" y="887.5" width="1.6" height="0.8" fill="#3b82f6" opacity="0.50"/><rect x="790.50" y="886.2" width="1.6" height="2.1" fill="#3b82f6" opacity="0.90"/><rect x="793.80" y="885.9" width="1.6" height="2.4" fill="#3b82f6" opacity="0.90"/><rect x="816.90" y="881.3" width="1.6" height="7.0" fill="#3b82f6" opacity="0.90"/><rect x="821.80" y="871.5" width="1.6" height="16.8" fill="#3b82f6" opacity="0.90"/><rect x="823.50" y="826.0" width="1.6" height="62.3" fill="#3b82f6" opacity="0.90"/><rect x="831.70" y="880.7" width="1.6" height="7.6" fill="#3b82f6" opacity="0.90"/><rect x="854.70" y="886.2" width="1.6" height="2.1" fill="#3b82f6" opacity="0.90"/><rect x="897.80" y="880.3" width="1.6" height="8.0" fill="#3b82f6" opacity="0.90"/><rect x="901.20" y="886.2" width="1.6" height="2.1" fill="#3b82f6" opacity="0.90"/><rect x="909.20" y="885.0" width="1.6" height="3.3" fill="#3b82f6" opacity="0.90"/><rect x="935.90" y="885.9" width="1.6" height="2.4" fill="#3b82f6" opacity="0.90"/><rect x="937.60" y="882.3" width="1.6" height="6.0" fill="#3b82f6" opacity="0.90"/><rect x="939.20" y="870.6" width="1.6" height="17.7" fill="#3b82f6" opacity="0.90"/><rect x="940.90" y="887.3" width="1.6" height="1.0" fill="#3b82f6" opacity="0.90"/><rect x="942.30" y="885.0" width="1.6" height="3.3" fill="#3b82f6" opacity="0.90"/><rect x="975.20" y="887.3" width="1.6" height="1.0" fill="#3b82f6" opacity="0.40"/><rect x="982.10" y="887.3" width="1.6" height="1.0" fill="#3b82f6" opacity="0.60"/><rect x="988.00" y="887.5" width="1.6" height="0.8" fill="#3b82f6" opacity="0.50"/><rect x="990.00" y="887.3" width="1.6" height="1.0" fill="#3b82f6" opacity="0.60"/><rect x="993.50" y="885.0" width="1.6" height="3.3" fill="#3b82f6" opacity="0.90"/><rect x="1026.30" y="884.1" width="1.6" height="4.2" fill="#3b82f6" opacity="0.90"/><rect x="1028.30" y="885.3" width="1.6" height="3.0" fill="#3b82f6" opacity="0.90"/><rect x="1033.20" y="886.6" width="1.6" height="1.7" fill="#3b82f6" opacity="0.90"/><rect x="1054.60" y="876.1" width="1.6" height="12.2" fill="#3b82f6" opacity="0.90"/><rect x="1056.30" y="863.0" width="1.6" height="25.3" fill="#3b82f6" opacity="0.90"/><rect x="741.0" y="947" width="12.5" height="12.2" fill="#ebf3fe" stroke="#3b82f6" stroke-width="1.8"/><text x="759.5" y="956" class="ax" textLength="113.1" lengthAdjust="spacingAndGlyphs">Pemasukan Harian</text><line x1="1215.9" x2="1699.3" y1="705.5" y2="705.5" stroke="#e3e5ea" stroke-width="1"/><line x1="1215.9" x2="1699.3" y1="741.5" y2="741.5" stroke="#e3e5ea" stroke-width="1"/><line x1="1215.9" x2="1699.3" y1="778.5" y2="778.5" stroke="#e3e5ea" stroke-width="1"/><line x1="1215.9" x2="1699.3" y1="815.5" y2="815.5" stroke="#e3e5ea" stroke-width="1"/><line x1="1215.9" x2="1699.3" y1="851.5" y2="851.5" stroke="#e3e5ea" stroke-width="1"/><line x1="1215.9" x2="1699.3" y1="888.5" y2="888.5" stroke="#e3e5ea" stroke-width="1"/><text x="1156.3" y="708.0" class="ax" textLength="56.1" lengthAdjust="spacingAndGlyphs">2,500,000</text><text x="1156.3" y="744.9" class="ax" textLength="56.1" lengthAdjust="spacingAndGlyphs">2,000,000</text><text x="1159.2" y="781.5" class="ax" textLength="53.2" lengthAdjust="spacingAndGlyphs">1,500,000</text><text x="1159.2" y="818.5" class="ax" textLength="53.2" lengthAdjust="spacingAndGlyphs">1,000,000</text><text x="1165.4" y="854.5" class="ax" textLength="47" lengthAdjust="spacingAndGlyphs">500,000</text><text x="1205.8" y="891.8" class="ax" textLength="6.6" lengthAdjust="spacingAndGlyphs">0</text><text transform="translate(1230.3,903.4) rotate(-50)" text-anchor="end" y="4.2" class="ax">00:00</text><text transform="translate(1253.3,903.4) rotate(-50)" text-anchor="end" y="4.2" class="ax">14:00</text><text transform="translate(1276.4,903.4) rotate(-50)" text-anchor="end" y="4.2" class="ax">04:00</text><text transform="translate(1299.5,903.4) rotate(-50)" text-anchor="end" y="4.2" class="ax">18:00</text><text transform="translate(1322.5,903.4) rotate(-50)" text-anchor="end" y="4.2" class="ax">08:00</text><text transform="translate(1345.5,903.4) rotate(-50)" text-anchor="end" y="4.2" class="ax">22:00</text><text transform="translate(1368.6,903.4) rotate(-50)" text-anchor="end" y="4.2" class="ax">12:00</text><text transform="translate(1391.6,903.4) rotate(-50)" text-anchor="end" y="4.2" class="ax">02:00</text><text transform="translate(1414.7,903.4) rotate(-50)" text-anchor="end" y="4.2" class="ax">16:00</text><text transform="translate(1437.8,903.4) rotate(-50)" text-anchor="end" y="4.2" class="ax">06:00</text><text transform="translate(1460.8,903.4) rotate(-50)" text-anchor="end" y="4.2" class="ax">20:00</text><text transform="translate(1483.8,903.4) rotate(-50)" text-anchor="end" y="4.2" class="ax">10:00</text><text transform="translate(1506.9,903.4) rotate(-50)" text-anchor="end" y="4.2" class="ax">00:00</text><text transform="translate(1530.0,903.4) rotate(-50)" text-anchor="end" y="4.2" class="ax">14:00</text><text transform="translate(1553.0,903.4) rotate(-50)" text-anchor="end" y="4.2" class="ax">04:00</text><text transform="translate(1576.0,903.4) rotate(-50)" text-anchor="end" y="4.2" class="ax">18:00</text><text transform="translate(1599.1,903.4) rotate(-50)" text-anchor="end" y="4.2" class="ax">08:00</text><text transform="translate(1622.2,903.4) rotate(-50)" text-anchor="end" y="4.2" class="ax">22:00</text><text transform="translate(1645.2,903.4) rotate(-50)" text-anchor="end" y="4.2" class="ax">12:00</text><text transform="translate(1668.2,903.4) rotate(-50)" text-anchor="end" y="4.2" class="ax">02:00</text><text transform="translate(1691.3,903.4) rotate(-50)" text-anchor="end" y="4.2" class="ax">16:00</text><rect x="1242.10" y="880.3" width="1.6" height="8.0" fill="#ef4444" opacity="0.90"/><rect x="1245.10" y="851.1" width="1.6" height="37.2" fill="#ef4444" opacity="0.90"/><rect x="1247.00" y="876.0" width="1.6" height="12.3" fill="#ef4444" opacity="0.90"/><rect x="1250.20" y="860.7" width="1.6" height="27.6" fill="#ef4444" opacity="0.90"/><rect x="1251.70" y="871.3" width="1.6" height="17.0" fill="#ef4444" opacity="0.90"/><rect x="1253.60" y="876.0" width="1.6" height="12.3" fill="#ef4444" opacity="0.90"/><rect x="1255.30" y="882.3" width="1.6" height="6.0" fill="#ef4444" opacity="0.90"/><rect x="1256.80" y="875.3" width="1.6" height="13.0" fill="#ef4444" opacity="0.90"/><rect x="1286.40" y="882.3" width="1.6" height="6.0" fill="#ef4444" opacity="0.90"/><rect x="1321.00" y="880.3" width="1.6" height="8.0" fill="#ef4444" opacity="0.90"/><rect x="1322.90" y="877.1" width="1.6" height="11.2" fill="#ef4444" opacity="0.90"/><rect x="1325.90" y="882.3" width="1.6" height="6.0" fill="#ef4444" opacity="0.90"/><rect x="1327.60" y="876.9" width="1.6" height="11.4" fill="#ef4444" opacity="0.90"/><rect x="1329.50" y="885.0" width="1.6" height="3.3" fill="#ef4444" opacity="0.90"/><rect x="1357.60" y="760.8" width="1.6" height="127.5" fill="#ef4444" opacity="0.90"/><rect x="1365.70" y="875.3" width="1.6" height="13.0" fill="#ef4444" opacity="0.90"/><rect x="1367.40" y="883.3" width="1.6" height="5.0" fill="#ef4444" opacity="0.90"/><rect x="1369.10" y="861.1" width="1.6" height="27.2" fill="#ef4444" opacity="0.90"/><rect x="1370.80" y="876.0" width="1.6" height="12.3" fill="#ef4444" opacity="0.90"/><rect x="1372.50" y="876.0" width="1.6" height="12.3" fill="#ef4444" opacity="0.90"/><rect x="1397.30" y="852.0" width="1.6" height="36.3" fill="#ef4444" opacity="0.90"/><rect x="1400.50" y="883.5" width="1.6" height="4.8" fill="#ef4444" opacity="0.90"/><rect x="1402.20" y="874.5" width="1.6" height="13.8" fill="#ef4444" opacity="0.90"/><rect x="1410.50" y="885.0" width="1.6" height="3.3" fill="#ef4444" opacity="0.90"/><rect x="1441.80" y="819.9" width="1.6" height="68.4" fill="#ef4444" opacity="0.90"/><rect x="1520.90" y="886.3" width="1.6" height="2.0" fill="#ef4444" opacity="0.90"/><rect x="1522.60" y="735.1" width="1.6" height="153.2" fill="#ef4444" opacity="0.90"/><rect x="1555.80" y="724.5" width="1.6" height="163.8" fill="#ef4444" opacity="0.90"/><rect x="1595.10" y="745.3" width="1.6" height="143.0" fill="#ef4444" opacity="0.90"/><rect x="1596.90" y="839.3" width="1.6" height="49.0" fill="#ef4444" opacity="0.90"/><rect x="1606.80" y="884.1" width="1.6" height="4.2" fill="#ef4444" opacity="0.90"/><rect x="1611.70" y="870.9" width="1.6" height="17.4" fill="#ef4444" opacity="0.90"/><rect x="1613.40" y="798.6" width="1.6" height="89.7" fill="#ef4444" opacity="0.90"/><rect x="1636.20" y="876.3" width="1.6" height="12.0" fill="#ef4444" opacity="0.90"/><rect x="1651.50" y="858.3" width="1.6" height="30.0" fill="#ef4444" opacity="0.90"/><rect x="1674.40" y="886.8" width="1.6" height="1.5" fill="#ef4444" opacity="0.90"/><rect x="1357.9" y="947" width="12.5" height="12.2" fill="#fdecec" stroke="#ef4444" stroke-width="1.8"/><text x="1376.4" y="956" class="ax" textLength="119.3" lengthAdjust="spacingAndGlyphs">Pengeluaran Harian</text></svg>
<svg class="ic" style="left:843px;top:546px" width="20" height="20" viewBox="0 0 20 20" fill="#22c55e"><path fill-rule="evenodd" clip-rule="evenodd" d="M12.577 4.878a.75.75 0 0 1 .919-.53l4.78 1.281a.75.75 0 0 1 .531.919l-1.281 4.78a.75.75 0 0 1-1.449-.387l.81-3.022a19.407 19.407 0 0 0-5.594 5.203.75.75 0 0 1-1.139.093L7 10.06l-4.72 4.72a.75.75 0 0 1-1.06-1.061l5.25-5.25a.75.75 0 0 1 1.06 0l3.074 3.073a20.923 20.923 0 0 1 5.545-4.931l-3.042-.815a.75.75 0 0 1-.53-.919Z"/></svg><svg class="ic" style="left:1153px;top:546px" width="20" height="20" viewBox="0 0 20 20" fill="#ef4444"><path fill-rule="evenodd" clip-rule="evenodd" d="M1.22 5.222a.75.75 0 0 1 1.06 0L7 9.942l3.768-3.769a.75.75 0 0 1 1.113.058 20.908 20.908 0 0 1 3.813 7.254l1.574-2.727a.75.75 0 0 1 1.3.75l-2.475 4.286a.75.75 0 0 1-1.025.275l-4.287-2.475a.75.75 0 0 1 .75-1.3l2.71 1.565a19.422 19.422 0 0 0-3.013-6.024L7.53 11.533a.75.75 0 0 1-1.06 0l-5.25-5.25a.75.75 0 0 1 0-1.06Z"/></svg>
<span class="t" id="t28" style="left:510.1px;top:143px;font-size:29.8px;color:#09090b;font-weight:700;-webkit-text-stroke:0.3px #09090b;transform:scaleX(1.0524);transform-origin:0 0;">Dashboard</span>
<span class="t" id="t29" style="left:533.3px;top:238px;font-size:14.3px;color:#09090b;-webkit-text-stroke:0.3px #09090b;transform:scaleX(1.0673);transform-origin:0 0;">Periode</span>
<span class="t" id="t30" style="left:545.3px;top:276px;font-size:14.2px;color:#ffffff;font-weight:700;transform:scaleX(1.0644);transform-origin:0 0;">Harian</span>
<span class="t" id="t31" style="left:629.3px;top:276px;font-size:14.2px;color:#09090b;font-weight:700;transform:scaleX(1.0700);transform-origin:0 0;letter-spacing:0.030px;">Mingguan</span>
<span class="t" id="t32" style="left:737.8px;top:276px;font-size:14.2px;color:#09090b;font-weight:700;transform:scaleX(1.0700);transform-origin:0 0;letter-spacing:0.167px;">Tahunan</span>
<span class="t" id="t33" style="left:533.5px;top:330px;font-size:14.3px;color:#09090b;-webkit-text-stroke:0.3px #09090b;transform:scaleX(1.0700);transform-origin:0 0;letter-spacing:0.437px;">Tanggal Mulai</span>
<span class="t" id="t34" style="left:1129.5px;top:330px;font-size:14.3px;color:#09090b;-webkit-text-stroke:0.3px #09090b;transform:scaleX(1.0700);transform-origin:0 0;letter-spacing:0.416px;">Tanggal Akhir</span>
<span class="t" id="t35" style="left:546.4px;top:368px;font-size:14.2px;color:#09090b;transform:scaleX(1.0700);transform-origin:0 0;letter-spacing:0.244px;">01<span style="font-size:19px;line-height:0;position:relative;top:2.200px">/</span>09<span style="font-size:19px;line-height:0;position:relative;top:2.200px">/</span>2025</span>
<span class="t" id="t36" style="left:1141.9px;top:368px;font-size:14.2px;color:#09090b;transform:scaleX(1.0700);transform-origin:0 0;letter-spacing:0.234px;">12<span style="font-size:19px;line-height:0;position:relative;top:2.200px">/</span><span style="color:#71717a">09</span><span style="font-size:19px;line-height:0;position:relative;top:2.200px">/</span><span style="color:#71717a">2025</span></span>
<span class="t" id="t37" style="left:533.3px;top:476px;font-size:14.3px;color:#71717a;-webkit-text-stroke:0.3px #71717a;transform:scaleX(1.0700);transform-origin:0 0;letter-spacing:0.139px;">Order</span>
<span class="t" id="t38" style="left:843.5px;top:476px;font-size:14.3px;color:#71717a;-webkit-text-stroke:0.3px #71717a;transform:scaleX(1.0700);transform-origin:0 0;letter-spacing:0.235px;">Pemasukan</span>
<span class="t" id="t39" style="left:1153.3px;top:476px;font-size:14.3px;color:#71717a;-webkit-text-stroke:0.3px #71717a;transform:scaleX(1.0700);transform-origin:0 0;letter-spacing:0.311px;">Pengeluaran</span>
<span class="t" id="t40" style="left:1463.3px;top:476px;font-size:14.3px;color:#71717a;-webkit-text-stroke:0.3px #71717a;transform:scaleX(1.0627);transform-origin:0 0;">Laba Bersih</span>
<span class="t" id="t41" style="left:533.5px;top:503px;font-size:29.7px;color:#09090b;font-weight:700;transform:scaleX(1.0700);transform-origin:0 0;letter-spacing:0.894px;">88</span>
<span class="t" id="t42" style="left:843.5px;top:503px;font-size:29.7px;color:#09090b;font-weight:700;transform:scaleX(1.0322);transform-origin:0 0;">Rp 5.030.300</span>
<span class="t" id="t43" style="left:1153.3px;top:503px;font-size:29.7px;color:#09090b;font-weight:700;transform:scaleX(0.9913);transform-origin:0 0;">Rp 16.048.572</span>
<span class="t" id="t44" style="left:1463.3px;top:503px;font-size:29.7px;color:#09090b;font-weight:700;transform:scaleX(0.9352);transform-origin:0 0;">Rp -11.018.272</span>
<span class="t" id="t45" style="left:867.3px;top:548px;font-size:14.3px;color:#16a34a;-webkit-text-stroke:0.1px #16a34a;transform:scaleX(1.0700);transform-origin:0 0;letter-spacing:0.499px;">omset</span>
<span class="t" id="t46" style="left:1177.5px;top:548px;font-size:14.3px;color:#dc2626;-webkit-text-stroke:0.1px #dc2626;transform:scaleX(1.0691);transform-origin:0 0;">expense</span>
<span class="t" id="t47" style="left:1463.3px;top:548px;font-size:14.3px;color:#2563eb;-webkit-text-stroke:0.1px #2563eb;transform:scaleX(1.0700);transform-origin:0 0;letter-spacing:0.226px;">Keuntungan bersih</span>
<span class="t" id="t48" style="left:533.3px;top:633px;font-size:15.7px;color:#09090b;font-weight:700;transform:scaleX(1.0700);transform-origin:0 0;letter-spacing:0.361px;">Pemasukan</span>
<span class="t" id="t49" style="left:1153.3px;top:633px;font-size:15.7px;color:#09090b;font-weight:700;transform:scaleX(1.0700);transform-origin:0 0;letter-spacing:0.323px;">Pengeluaran</span>
</main>

</body></html>
